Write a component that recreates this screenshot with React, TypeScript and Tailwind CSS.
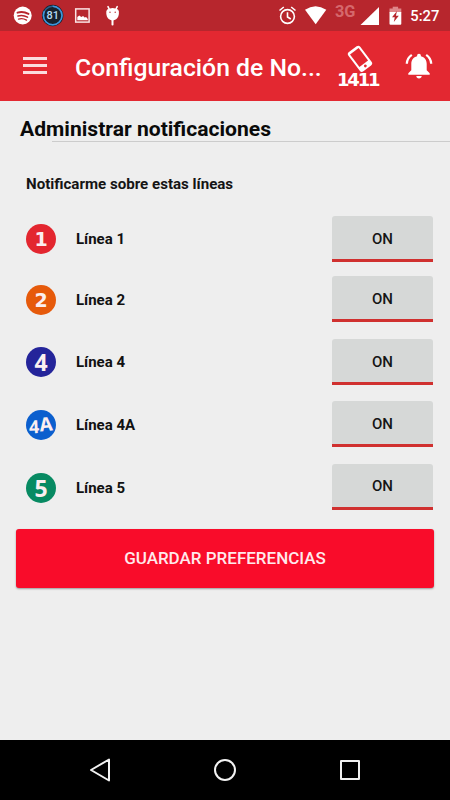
import { useState } from 'react';

type Line = {
  id: string;
  rowClass: string;
  buttonClass: string;
  color: string;
  font: string;
  size: number;
  baseline: number;
};

const LINES: Line[] = [
  { id: '1', rowClass: 'h-[62px]', buttonClass: 'mb-0', color: '#e3262f', font: 'DejaVu Sans', size: 19, baseline: 22 },
  { id: '2', rowClass: 'h-[60px]', buttonClass: 'mb-0.5', color: '#e65a0b', font: 'DejaVu Sans', size: 19, baseline: 22 },
  { id: '4', rowClass: 'h-[64px]', buttonClass: 'mb-0', color: '#24249a', font: 'Noto Sans', size: 23, baseline: 23.8 },
  { id: '4A', rowClass: 'h-[62px]', buttonClass: 'mb-0.5', color: '#0b5fce', font: 'Noto Sans', size: 18, baseline: 22 },
  { id: '5', rowClass: 'h-[63px]', buttonClass: 'mb-0.5', color: '#078a62', font: 'Noto Sans', size: 23, baseline: 24 },
];

function StatusBar() {
  return (
    <div className="flex h-[31px] shrink-0 bg-[#b7262d]">
      <svg width="450" height="31" viewBox="0 0 450 31" fontFamily="Roboto, sans-serif">
        {/* music */}
        <circle cx="22.700" cy="15.500" r="9" fill="#fff" />
        <g fill="none" stroke="#b7262d" strokeLinecap="round">
          <path d="M17.500 12.700q5.500-1.700 11 1.200" strokeWidth="1.900" />
          <path d="M18 16q4.800-1.400 9.500 1.100" strokeWidth="1.600" />
          <path d="M18.500 19.100q4.200-1.200 8 1" strokeWidth="1.300" />
        </g>
        {/* battery percentage */}
        <circle cx="52.700" cy="15.500" r="10.700" fill="#17222e" />
        <circle cx="52.700" cy="15.500" r="9.300" fill="none" stroke="#2c5f8b" strokeWidth="1.500" />
        <circle cx="52.700" cy="15.500" r="9.300" fill="none" stroke="#3f96dc" strokeWidth="1.500" strokeDasharray="48 10.400" transform="rotate(-90 52.700 15.500)" />
        <text x="52.700" y="19.400" textAnchor="middle" fontSize="11" fontWeight="500" fill="#b5dcf4">81</text>
        {/* picture */}
        <rect x="75.700" y="8.900" width="13.400" height="13.200" fill="none" stroke="#fbe3e4" strokeWidth="1.500" />
        <path d="M77.300 20.300v-3.200l2-1.500 2 1.300 1.800-1 1.500 1.500 1.500-.4 1.700 2v1.300z" fill="#fff" />
        {/* android bug */}
        <g fill="#fff">
          <path d="M107.200 9.600q5.500-3 10.800 0q1.300 1.400.9 4.200c-.4 3.800-2.600 6.600-6.300 6.600s-5.900-2.800-6.300-6.600q-.4-2.800.9-4.200z" />
          <rect x="111.500" y="19" width="2" height="6.500" rx=".8" />
        </g>
        <path d="M108 6.600l1.200 2.400M117.200 6.600l-1.200 2.400" stroke="#fff" strokeWidth="1.600" strokeLinecap="round" />
        <circle cx="110" cy="12.300" r=".7" fill="#b7262d" />
        <circle cx="115.200" cy="12.300" r=".7" fill="#b7262d" />
        {/* alarm */}
        <g fill="none" stroke="#fff" strokeWidth="1.600">
          <circle cx="287.500" cy="16.500" r="6.900" />
          <path d="M287.500 12.200v4.800l3.300 2M279.500 10.500l4.300-3.500M295.500 10.500l-4.300-3.500" />
        </g>
        {/* signal */}
        <path d="M305 9.800q10.500-7 21.300 0L315.700 24.200z" fill="#fff" />
        <text x="335" y="17.200" fontSize="16" fontWeight="700" fill="#d5686c" textLength="20.500" lengthAdjust="spacingAndGlyphs">3G</text>
        <path d="M379 7v18h-18.500z" fill="#fff" />
        {/* battery */}
        <rect x="392.700" y="6.700" width="5.400" height="3" fill="#df8689" />
        <path d="M389.500 8.500h11.800v4h-11.800z" fill="#df8689" />
        <path d="M389.500 12h11.800v11.800q0 1-1 1h-9.800q-1 0-1-1z" fill="#fff" />
        <path d="M397 11l-5 6.200h2.800l-1 4.800 5-6.300h-2.900z" fill="#b7262d" />
        <text x="410.300" y="21" fontSize="15.500" fontWeight="500" fill="#fff" textLength="29" lengthAdjust="spacingAndGlyphs">5:27</text>
      </svg>
    </div>
  );
}

function Toolbar() {
  return (
    <header className="flex h-[70px] shrink-0 items-center bg-[#e32831] text-white">
      <button className="mb-px ml-[23px] flex w-6 flex-col gap-1" aria-label="Menú">
        <span className="h-[3px] bg-[#fbdcde]" />
        <span className="h-[3px] bg-[#fbdcde]" />
        <span className="h-[3px] bg-[#fbdcde]" />
      </button>
      <h1 className="ml-7 w-[263px] whitespace-nowrap pt-1 text-[24.750px] font-medium leading-8">Configuración de No...</h1>
      <button className="w-[42px]" aria-label="Llamar 1411">
        <svg className="overflow-visible" width="42" height="48" viewBox="0 0 42 48">
          <g transform="translate(22 16.800) rotate(-37)">
            <rect x="-7.400" y="-12" width="14.800" height="24" rx="2.600" fill="#fff" />
            <rect x="-5.400" y="-9.400" width="10.800" height="15.600" fill="#e32831" />
            <circle cx="0" cy="8.900" r="1.400" fill="#e32831" />
          </g>
          <text x="-1" y="44.300" fontFamily="DejaVu Sans, sans-serif" fontSize="18" fontWeight="700" letterSpacing="-2.200" fill="#fff">1411</text>
        </svg>
      </button>
      <button className="ml-[25px]" aria-label="Notificaciones">
        <svg width="28" height="28" viewBox="0 0 28 28">
          <path d="M14 1.700c1.200 0 1.900.8 1.900 2v.5c3.800.9 5.800 3.800 5.800 7.600v6.500l3 3v1.400H3.300v-1.400l3-3v-6.500c0-3.800 2-6.700 5.800-7.600v-.5c0-1.200.7-2 1.900-2z" fill="#fff" />
          <path d="M11.300 24h5.400c0 1.500-1.200 2.500-2.700 2.500s-2.700-1-2.700-2.500z" fill="#fff" />
          <path d="M1.800 11.700c.2-3.800 2-6.800 5-8.800M26.200 11.700c-.2-3.800-2-6.800-5-8.800" fill="none" stroke="#fff" strokeWidth="2.300" />
        </svg>
      </button>
    </header>
  );
}

function LineBadge({ line }: { line: Line }) {
  return (
    <svg className="overflow-visible" width="30" height="30" viewBox="0 0 30 30" fontFamily={`${line.font}, sans-serif`} fontWeight="700" fill="#fbeff0">
      <circle cx="15" cy="15" r="15" fill={line.color} />
      {line.id === '4A' ? (
        <g>
          <text x="3.300" y="23.300" fontSize="18" transform="rotate(-3 8 22)">4</text>
          <text x="14" y="21" fontSize="19" transform="rotate(-5 20 20)">A</text>
        </g>
      ) : (
        <text x="15" y={line.baseline} fontSize={line.size} textAnchor="middle">{line.id}</text>
      )}
    </svg>
  );
}

function LineRow({ line }: { line: Line }) {
  const [enabled, setEnabled] = useState(true);

  return (
    <li className={`flex items-center pl-[26px] pr-[17px] ${line.rowClass}`}>
      <LineBadge line={line} />
      <span className="ml-5 flex-1 text-[15px] font-bold leading-5 text-[#111]">Línea {line.id}</span>
      <button
        className={`flex h-[46px] w-[101px] flex-col overflow-hidden rounded-t-[3px] bg-[#d6d8d7] text-[15px] font-medium text-[#151515] ${line.buttonClass}`}
        onClick={() => setEnabled(!enabled)}
      >
        <span className="flex w-full flex-1 items-center justify-center pt-[3px]">{enabled ? 'ON' : 'OFF'}</span>
        <span className={enabled ? 'h-[3px] w-full bg-[#d0302f]' : 'h-[3px] w-full bg-[#bbb]'} />
      </button>
    </li>
  );
}

function NavigationBar() {
  return (
    <nav className="flex h-[60px] shrink-0 items-center justify-between bg-black px-[88px]">
      <svg width="24" height="26" viewBox="0 0 24 26" fill="none" stroke="#f2f2f2" strokeWidth="2" strokeLinejoin="round">
        <path d="M3 13L21 2.500v21z" />
      </svg>
      <svg width="24" height="24" viewBox="0 0 24 24" fill="none" stroke="#f2f2f2" strokeWidth="2">
        <circle cx="12" cy="12" r="10" />
      </svg>
      <svg width="24" height="24" viewBox="0 0 24 24" fill="none" stroke="#f2f2f2" strokeWidth="2" strokeLinejoin="round">
        <rect x="3" y="3" width="18" height="18" />
      </svg>
    </nav>
  );
}

export default function App() {
  return (
    <div className="flex h-[800px] w-[450px] flex-col overflow-hidden bg-[#eeeeee] font-['Roboto',sans-serif]">
      <StatusBar />
      <Toolbar />
      <main className="flex flex-1 flex-col">
        <h2 className="h-10 pl-5 pt-[15px] text-[21.100px] font-bold leading-[26px] text-[#0a0a0a]">Administrar notificaciones</h2>
        <div className="ml-[52px] h-px bg-[#cccccc]" />
        <h3 className="h-[66px] pl-[26px] pt-8 text-[15.100px] font-bold leading-5 text-[#151515]">Notificarme sobre estas líneas</h3>
        <ul>
          {LINES.map((line) => (
            <LineRow key={line.id} line={line} />
          ))}
        </ul>
        <button className="mx-4 mt-2.5 h-[59px] rounded-[3px] bg-[#f90c2a] pt-px text-[17px] font-medium text-[#ffe9ec] shadow-[0_1px_2px_rgba(0,0,0,0.350)]">
          GUARDAR PREFERENCIAS
        </button>
      </main>
      <NavigationBar />
    </div>
  );
}
